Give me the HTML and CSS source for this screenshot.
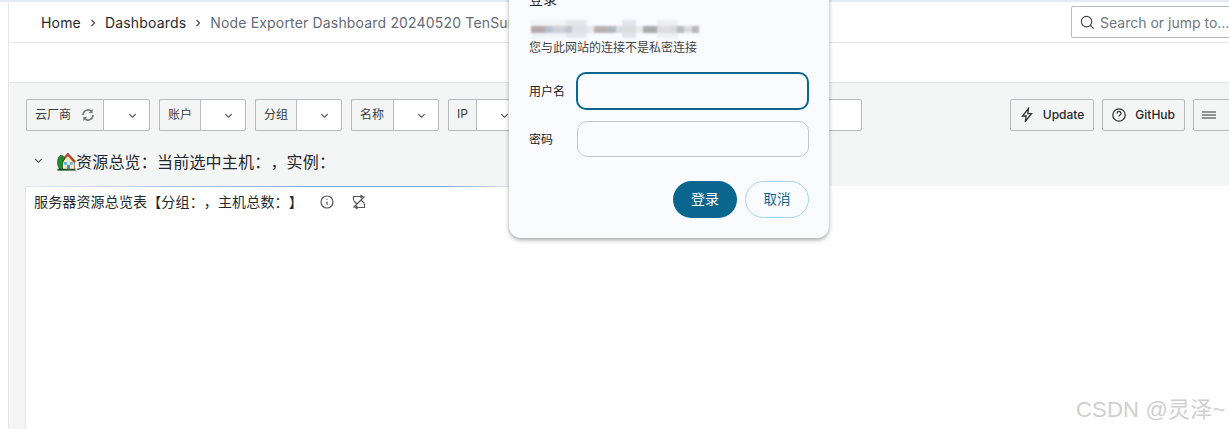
FILE: index.html
```html
<!DOCTYPE html>
<html lang="zh">
<head>
<meta charset="utf-8">
<title>Node Exporter Dashboard</title>
<link rel="stylesheet" href="styles.css">
</head>
<body>
<div class="app">
  <aside class="rail"></aside>
  <main class="main">
    <header class="topbar">
      <nav class="crumbs">
        <a class="crumb">Home</a>
        <svg class="sep" viewBox="0 0 8 10"><path d="M2.5 2 L5.5 5 L2.5 8" /></svg>
        <a class="crumb">Dashboards</a>
        <svg class="sep" viewBox="0 0 8 10"><path d="M2.5 2 L5.5 5 L2.5 8" /></svg>
        <span class="crumb current">Node Exporter Dashboard 20240520 TenSunS</span>
      </nav>
      <div class="search">
        <svg class="search-icon" viewBox="0 0 16 16"><circle cx="7" cy="7" r="5.6" /><path d="M11.2 11.2 L14.6 14.6" /></svg>
        <span>Search or jump to...</span>
      </div>
    </header>
    <div class="subbar"></div>
    <section class="content">
      <div class="toolbar">
        <div class="vars">
          <div class="var">
            <label class="var-label first">云厂商
              <svg class="refresh" viewBox="0 0 16 16"><path d="M3 8a5 5 0 0 1 8.5-3.6M13 8a5 5 0 0 1-8.5 3.6" /><path class="fill" d="M12.6 2v4h-4zM3.4 14v-4h4z" /></svg>
            </label>
            <div class="var-select w47"><svg class="chev" viewBox="0 0 10 6"><path d="M1.5 1 L5 4.5 L8.5 1" /></svg></div>
          </div>
          <div class="var">
            <label class="var-label w41">账户</label>
            <div class="var-select w46"><svg class="chev" viewBox="0 0 10 6"><path d="M1.5 1 L5 4.5 L8.5 1" /></svg></div>
          </div>
          <div class="var">
            <label class="var-label w41">分组</label>
            <div class="var-select w46"><svg class="chev" viewBox="0 0 10 6"><path d="M1.5 1 L5 4.5 L8.5 1" /></svg></div>
          </div>
          <div class="var">
            <label class="var-label w42">名称</label>
            <div class="var-select w46"><svg class="chev" viewBox="0 0 10 6"><path d="M1.5 1 L5 4.5 L8.5 1" /></svg></div>
          </div>
          <div class="var">
            <label class="var-label w28">IP</label>
            <div class="var-select w46"><svg class="chev" viewBox="0 0 10 6"><path d="M1.5 1 L5 4.5 L8.5 1" /></svg></div>
          </div>
          <div class="var">
            <label class="var-label w41"></label>
            <div class="var-select wide"></div>
          </div>
        </div>
        <div class="actions">
          <button class="btn">
            <svg class="btn-icon" viewBox="0 0 16 16"><path d="M9.5 1.5 L3.5 9 H7.2 L6.2 14.5 L12.5 6.6 H8.8 Z" /></svg>
            Update
          </button>
          <button class="btn">
            <svg class="btn-icon" viewBox="0 0 16 16"><circle cx="8" cy="8" r="6.2" /><path d="M6.2 6.4a1.9 1.9 0 1 1 2.8 1.6c-.6.4-1 .7-1 1.4" /><path d="M8 11.2v.4" /></svg>
            GitHub
          </button>
          <button class="btn menu-btn">
            <svg class="menu-icon" viewBox="0 0 14 8"><path d="M0 1H14M0 4H14M0 7H14" /></svg>
          </button>
        </div>
      </div>
      <div class="row-head">
        <svg class="row-chev" viewBox="0 0 10 6"><path d="M1.5 1 L5 4.5 L8.5 1" /></svg>
        <svg class="house" viewBox="0 0 20 20">
          <rect x="0.5" y="17.6" width="19" height="2" fill="#14551c" />
          <path d="M5.5 9 L11.5 2 L18.5 9 V18 H5.5 Z" fill="#f6e7c3" stroke="#5b3a1e" stroke-width=".6" />
          <path d="M3.5 10 L11.5 1 L19.4 9.8 L17.8 11 L11.5 3.8 L5 11 Z" fill="#c9472a" stroke="#5b2412" stroke-width=".5" />
          <rect x="7.4" y="10.5" width="3" height="3" fill="#58b6e8" />
          <rect x="13.6" y="10.5" width="3" height="3" fill="#58b6e8" />
          <rect x="10.6" y="13.5" width="3" height="4.5" fill="#3b8fc9" />
          <path d="M3 4 C0 7 -0.5 14 3 18 H6 C5 14 6 10 8 7 C7 4 5 3 3 4Z" fill="#1f8f2c" stroke="#0d4d16" stroke-width=".7" />
        </svg>
        <span class="row-title">资源总览：当前选中主机：，实例：</span>
      </div>
      <article class="panel">
        <div class="panel-line"></div>
        <div class="panel-head">
          <span class="panel-title">服务器资源总览表【分组：，主机总数：】</span>
          <svg class="panel-icon info" viewBox="0 0 16 16"><circle cx="8" cy="8" r="6" /><path d="M8 7.4V11M8 5v.7" /></svg>
          <svg class="panel-icon sync" viewBox="0 0 16 16"><path d="M2.5 6V2.5H11" /><path d="M9.5 1 L11.5 2.5 L9.5 4" /><path d="M13.5 10V13.5H5" /><path d="M6.5 12 L4.5 13.5 L6.5 15" /><path d="M13.5 2.5 L2.5 13.5" /><path d="M2.5 6.5 L6 10M10 6 L13.5 9.5" /></svg>
        </div>
      </article>
    </section>
  </main>
</div>

<form class="login">
  <h2 class="login-title">登录</h2>
  <div class="login-host"></div>
  <p class="login-note">您与此网站的连接不是私密连接</p>
  <div class="field">
    <label class="field-label">用户名</label>
    <div class="field-input focused"></div>
  </div>
  <div class="field">
    <label class="field-label">密码</label>
    <div class="field-input"></div>
  </div>
  <div class="login-actions">
    <button type="button" class="pill primary">登录</button>
    <button type="button" class="pill ghost">取消</button>
  </div>
</form>

<div class="watermark">CSDN @灵泽~</div>
</body>
</html>
```

FILE: styles.css
```css
* { box-sizing: border-box; }
html, body { margin: 0; padding: 0; height: 100%; }
body {
  width: 1229px;
  height: 429px;
  overflow: hidden;
  position: relative;
  background: #fff;
  color: #24292e;
  font-family: Inter, "Noto Sans CJK SC", sans-serif;
  font-size: 12px;
  text-spacing-trim: space-all;
}
.app {
  display: flex;
  height: 429px;
  padding-top: 2px;
  background: #fff;
  box-shadow: inset 0 2px 0 #e3ebf6;
}
.rail {
  width: 9px;
  flex: none;
  border-right: 1px solid #e4e6e8;
  margin-top: 1px;
}
.main { flex: 1; min-width: 0; display: flex; flex-direction: column; }

.topbar {
  height: 41px;
  flex: none;
  display: flex;
  align-items: center;
  justify-content: space-between;
  border-bottom: 1px solid #e4e6e8;
  padding-left: 32px;
}
.crumbs { display: flex; align-items: center; margin-top: 1px; font-size: 14px; letter-spacing: .17px; white-space: nowrap; }
.crumb { color: #24292e; }
.crumb.current { color: #636b75; }
.sep { width: 8px; height: 10px; margin: 0 8px; }
.sep path { fill: none; stroke: #444; stroke-width: 1.1; }
.search {
  width: 170px;
  flex: none;
  height: 32px;
  margin-right: -12px;
  display: flex;
  align-items: center;
  gap: 5px;
  padding-left: 8px;
  background: #fff;
  border: 1px solid #b8babd;
  border-radius: 2px;
  color: #6e7780;
  font-size: 14px;
  white-space: nowrap;
}
.search-icon { width: 15px; height: 15px; }
.search-icon circle, .search-icon path { fill: none; stroke: #444; stroke-width: 1.2; }

.subbar { height: 40px; flex: none; border-bottom: 1px solid #e4e6e8; }

.content { flex: 1; min-height: 0; background: #f4f5f5; padding: 16px 0 0 17px; display: flex; flex-direction: column; }
.toolbar { display: flex; justify-content: space-between; }
.vars { display: flex; gap: 9px; }
.var { display: flex; height: 32px; }
.var-label {
  display: flex;
  align-items: center;
  padding: 0 0 4px 8px;
  background: #f4f5f5;
  border: 1px solid #b8babd;
  border-right: 0;
  border-radius: 2px 0 0 2px;
  color: #3b4045;
  font-size: 12px;
}
.var-label.first { width: 77px; gap: 9px; }
.refresh { width: 16px; height: 16px; position: relative; top: 2px; }
.w41 { width: 41px; }
.w42 { width: 42px; }
.w28 { width: 28px; }
.var-select {
  display: flex;
  align-items: center;
  justify-content: flex-end;
  padding: 2px 12px 0 0;
  background: #fff;
  border: 1px solid #b8babd;
  border-radius: 0 2px 2px 0;
}
.w47 { width: 47px; }
.w46 { width: 46px; }
.wide { width: 290px; }
.chev { width: 9px; height: 6px; }
.chev path, .row-chev path { fill: none; stroke: #444; stroke-width: 1.2; }
.refresh path { fill: none; stroke: #777; stroke-width: 1.6; }
.refresh path.fill { fill: #777; stroke: none; }

.actions { display: flex; gap: 8px; margin-right: -8px; }
.btn {
  height: 32px;
  display: flex;
  align-items: center;
  gap: 8px;
  padding: 0 9px 1px 8px;
  background: #f4f5f5;
  border: 1px solid #b8babd;
  border-radius: 2px;
  color: #24292e;
  font-family: Inter, sans-serif;
  font-size: 12px;
  font-weight: 500;
}
.btn-icon { width: 16px; height: 16px; }
.btn-icon path, .btn-icon circle { fill: none; stroke: #333; stroke-width: 1.3; }
.menu-btn { width: 44px; }
.menu-icon { width: 14px; height: 8px; flex: none; }
.menu-icon path { stroke: #333; stroke-width: 1.2; fill: none; }

.row-head { display: flex; align-items: center; height: 24px; margin-top: 18px; padding-left: 8px; }
.row-chev { width: 9px; height: 6px; margin-right: 14px; }
.house { width: 19px; height: 19px; flex: none; }
.row-title { margin-top: -1px; font-size: 16px; letter-spacing: .2px; color: #24292e; white-space: nowrap; }

.panel { flex: 1; margin: 13px -1px 0 -1px; background: #fff; border-left: 1px solid #e4e6e8; position: relative; }
.panel-line { height: 1px; background: linear-gradient(90deg, #dfe8f6 0, #7ba6ea 60%, #7ba6ea 85%, #e4e6e8 100%); width: 490px; }
.panel-head { display: flex; align-items: center; height: 30px; padding-left: 8px; }
.panel-title { margin-top: -2px; font-size: 14px; letter-spacing: .15px; white-space: nowrap; color: #24292e; }
.panel-icon { width: 16px; height: 16px; }
.info { margin-left: 16px; }
.sync { margin-left: 16px; }
.panel-icon path, .panel-icon circle { fill: none; stroke: #555; stroke-width: 1.2; }

.login {
  position: absolute;
  left: 509px;
  top: -20px;
  width: 320px;
  height: 258px;
  padding: 9px 20px 0;
  background: #fafbff;
  border-radius: 12px;
  box-shadow: 0 2px 4px rgba(0,0,0,.35);
}
.login-title { margin: 0; font-size: 14px; font-weight: 400; line-height: 20px; color: #1e1e1e; }
.login-host {
  margin: 11px 0 0 2px;
  width: 168px;
  height: 18px;
  background:
    linear-gradient(90deg,
      #b5aaaa 0 14px, #b5c0cc 14px 21px, #cfd0d8 21px 34px, #c4c4d0 34px 41px, #e0e0e8 41px 56px,
      #e8eaf0 56px 63px, #b8b0b0 63px 77px, #b0b8c0 77px 85px, #d8dde0 85px 92px, #dcdcdc 92px 105px,
      #e8eaf0 105px 112px, #aaa 112px 126px, #ddd 126px 140px, #d8d8e0 140px 146px, #b8b8c0 146px 153px,
      #ddd 153px 161px, #b8b8b8 161px 168px) left center / 100% 7px no-repeat,
    linear-gradient(90deg,
      #f2f3f7 0 35px, #e6e7ee 35px 56px, #fafbff 56px 91px, #e4e5ea 91px 105px, #fafbff 105px 126px,
      #eeeff3 126px 147px, #fafbff 147px 168px);
  filter: blur(.8px);
}
.login-note { margin: 2px 0 0; font-size: 12px; line-height: 16px; color: #444; white-space: nowrap; }
.field { display: flex; align-items: center; margin-top: 16px; }
.field + .field { margin-top: 11px; }
.field-label { width: 48px; flex: none; padding-bottom: 2px; font-size: 12px; color: #222; }
.field-input { width: 232px; height: 36px; background: #fafbff; border: 1px solid #c4c6ca; border-radius: 10px; }
.field-input.focused { height: 38px; width: 234px; margin-left: -1px; border: 2px solid #0a668f; }
.login-actions { display: flex; justify-content: flex-end; gap: 8px; margin-top: 24px; }
.pill {
  width: 64px;
  height: 37px;
  border-radius: 19px;
  font-family: "Noto Sans CJK SC", sans-serif;
  font-size: 14px;
  padding: 0 0 3px;
}
.pill.primary { background: #0a668f; border: 0; color: #fff; }
.pill.ghost { background: transparent; border: 1px solid #a3d3f5; color: #0a668f; font-size: 13.5px; }

.watermark {
  position: absolute;
  left: 1076px;
  top: 396px;
  font-family: "Liberation Sans", "Noto Sans CJK SC", sans-serif;
  font-size: 22px;
  letter-spacing: .2px;
  line-height: 28px;
  color: #cfcfcf;
  white-space: nowrap;
}
```
